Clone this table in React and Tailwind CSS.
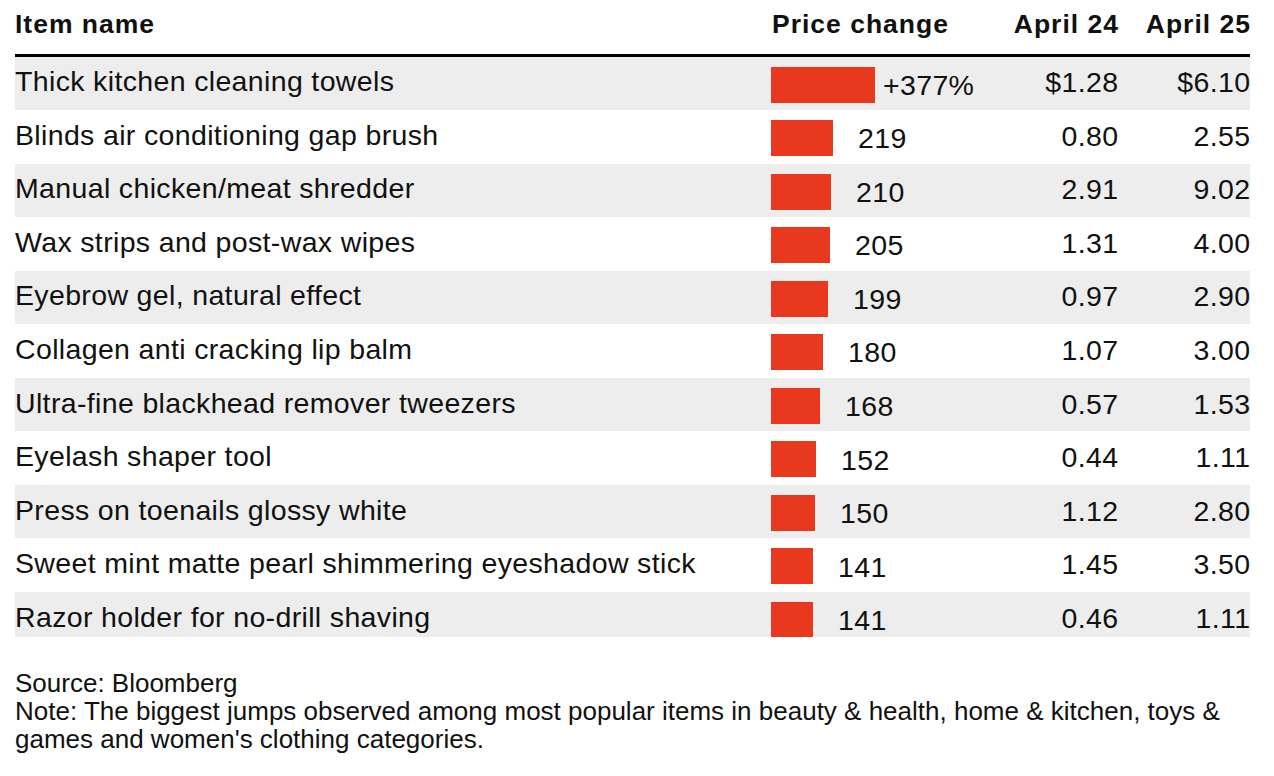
import React from "react";

const rows = [
  { name: "Thick kitchen cleaning towels", w: 104, label: "+377%", a: "$1.28", b: "$6.10", first: true },
  { name: "Blinds air conditioning gap brush", w: 62, label: "219", a: "0.80", b: "2.55" },
  { name: "Manual chicken/meat shredder", w: 60, label: "210", a: "2.91", b: "9.02" },
  { name: "Wax strips and post-wax wipes", w: 59, label: "205", a: "1.31", b: "4.00" },
  { name: "Eyebrow gel, natural effect", w: 57, label: "199", a: "0.97", b: "2.90" },
  { name: "Collagen anti cracking lip balm", w: 52, label: "180", a: "1.07", b: "3.00" },
  { name: "Ultra-fine blackhead remover tweezers", w: 49, label: "168", a: "0.57", b: "1.53" },
  { name: "Eyelash shaper tool", w: 45, label: "152", a: "0.44", b: "1.11" },
  { name: "Press on toenails glossy white", w: 44, label: "150", a: "1.12", b: "2.80" },
  { name: "Sweet mint matte pearl shimmering eyeshadow stick", w: 42, label: "141", a: "1.45", b: "3.50" },
  { name: "Razor holder for no-drill shaving", w: 42, label: "141", a: "0.46", b: "1.11" },
];

const font = { fontFamily: '"Liberation Sans", Arial, Helvetica, sans-serif' };

export default function App() {
  return (
    <div className="bg-white w-[1274px] h-[776px] overflow-hidden text-[#111111]" style={font}>
      <div className="ml-[15px] w-[1235px]">
        {/* Header */}
        <div className="grid grid-cols-[756px_200px_147px_132px] h-[56.5px] border-b-[3px] border-black text-[26.5px] leading-[26px] font-bold tracking-[1px]">
          <div className="pt-[11.1px]">Item name</div>
          <div className="pt-[11.1px] pl-[1px]">Price change</div>
          <div className="pt-[11.1px] text-right mr-[-1px]">April 24</div>
          <div className="pt-[11.1px] text-right mr-[-1px]">April 25</div>
        </div>
        {/* Rows */}
        <div className="h-[580.5px] overflow-hidden">
          {rows.map((r, i) => (
            <div
              key={i}
              className={
                "grid grid-cols-[756px_200px_147px_132px] h-[53.55px] text-[28.5px] leading-[28px] tracking-[0.35px] " +
                (i % 2 === 0 ? "bg-[#ededed]" : "bg-white")
              }
            >
              <div className="pt-[10.8px] whitespace-nowrap">{r.name}</div>
              <div className="flex items-start">
                <div className="mt-[10px] h-[36px] bg-[#e8391f] shrink-0" style={{ width: r.w + "px" }} />
                <div className="pt-[14.2px] ml-[8px] whitespace-nowrap">
                  {r.first ? (
                    r.label
                  ) : (
                    <>
                      <span className="invisible">+</span>
                      {r.label}
                    </>
                  )}
                </div>
              </div>
              <div className="pt-[11.8px] text-right mr-[-0.35px]">{r.a}</div>
              <div className="pt-[11.8px] text-right mr-[-0.35px]">{r.b}</div>
            </div>
          ))}
        </div>
        {/* Footer */}
        <div className="mt-[32px] text-[26px] leading-[28px]">
          <p>Source: Bloomberg</p>
          <p>
            Note: The biggest jumps observed among most popular items in beauty &amp; health, home &amp; kitchen, toys &amp; games and women's clothing categories.
          </p>
        </div>
      </div>
    </div>
  );
}
